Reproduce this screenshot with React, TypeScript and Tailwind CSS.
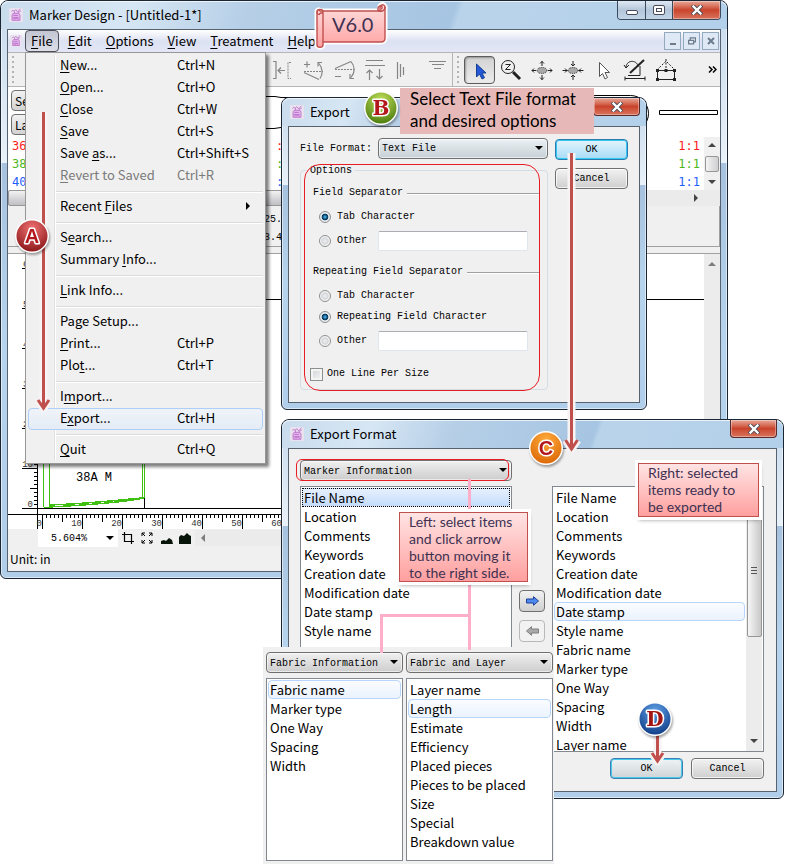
import type { ReactNode } from 'react';
import clsx from 'clsx';

interface MenuEntry {
  label: string;
  /** index of the underlined accelerator letter */
  key?: number;
  shortcut?: string;
  disabled?: boolean;
  submenu?: boolean;
}

const menuBar = ['File', 'Edit', 'Options', 'View', 'Treatment', 'Help'];

const fileMenu: MenuEntry[][] = [
  [
    { label: 'New...', key: 0, shortcut: 'Ctrl+N' },
    { label: 'Open...', key: 0, shortcut: 'Ctrl+O' },
    { label: 'Close', key: 0, shortcut: 'Ctrl+W' },
    { label: 'Save', key: 0, shortcut: 'Ctrl+S' },
    { label: 'Save as...', key: 5, shortcut: 'Ctrl+Shift+S' },
    { label: 'Revert to Saved', key: 0, shortcut: 'Ctrl+R', disabled: true },
  ],
  [{ label: 'Recent Files', key: 7, submenu: true }],
  [
    { label: 'Search...', key: 1 },
    { label: 'Summary Info...', key: 8 },
  ],
  [{ label: 'Link Info...', key: 0 }],
  [
    { label: 'Page Setup...', key: 2 },
    { label: 'Print...', key: 0, shortcut: 'Ctrl+P' },
    { label: 'Plot...', key: 3, shortcut: 'Ctrl+T' },
  ],
  [
    { label: 'Import...', key: 1 },
    { label: 'Export...', key: 1, shortcut: 'Ctrl+H' },
  ],
  [{ label: 'Quit', key: 0, shortcut: 'Ctrl+Q' }],
];

const markerFields = [
  'File Name',
  'Location',
  'Comments',
  'Keywords',
  'Creation date',
  'Modification date',
  'Date stamp',
  'Style name',
];

const fabricFields = ['Fabric name', 'Marker type', 'One Way', 'Spacing', 'Width'];

const layerFields = [
  'Layer name',
  'Length',
  'Estimate',
  'Efficiency',
  'Placed pieces',
  'Pieces to be placed',
  'Size',
  'Special',
  'Breakdown value',
];

const selectedFields = [...markerFields, ...fabricFields, 'Layer name'];

const sizes = [
  { size: '36', ratio: '1:1', color: 'text-[#ff1a1a]' },
  { size: '38', ratio: '1:1', color: 'text-[#4cb81c]' },
  { size: '40', ratio: '1:1', color: 'text-[#1f5fff]' },
];

function AppIcon({ className }: { className?: string }) {
  return (
    <svg viewBox="0 0 16 16" className={clsx('shrink-0', className)} aria-hidden="true">
      <rect width="16" height="16" rx="1" fill="#e9e2ee" />
      <path d="M4 6h8v8H4z" fill="#e3b6ea" />
      <path
        d="M3.500 14V7.500l2-1.500h5l2 1.500V14zM5 8.500h5M4 11h7M6 6c0-3 1-4 2-4s0 2 2 2 1-2 3-3M3 4c1-2 2-1 3 0M5 13c1-2 2 0 3-1s2 0 3 1M10 5c2 0 3-1 3-2"
        fill="none"
        stroke="#b968c9"
      />
    </svg>
  );
}

function CloseGlyph() {
  return (
    <svg viewBox="0 0 12 10" className="h-2.5 w-3" aria-hidden="true">
      <path d="M2.500 1.500l7 7M9.500 1.500l-7 7" stroke="#4a4a58" strokeWidth="4" strokeLinecap="square" />
      <path d="M2.500 1.500l7 7M9.500 1.500l-7 7" stroke="#fff" strokeWidth="2.400" strokeLinecap="square" />
    </svg>
  );
}

const closeStyle =
  'flex h-[18px] w-[47px] items-center justify-center bg-linear-to-b from-[#e6a89a] via-[#c9432b] via-50% to-[#d9735c] shadow-[inset_0_0_0_1px_rgba(255,255,255,0.35)]';

interface WindowProps {
  title: string;
  controls?: 'full' | 'close';
  className?: string;
  children: ReactNode;
}

function Window({ title, controls = 'close', className, children }: WindowProps) {
  return (
    <section
      aria-label={title}
      className={clsx(
        'flex flex-col rounded-t-lg rounded-b-md border border-[#1b2635] px-1.5 pb-1.5',
        'bg-[linear-gradient(to_bottom,#c6d9ec_0,#e9f1f9_28%,#a6c2de_28%,#b7d4ee_60%,#b0cdea_100%)] shadow-[inset_0_0_0_1px_rgba(255,255,255,0.55)]',
        className,
      )}
    >
      <header className="-mx-1.5 flex h-7 shrink-0 items-start rounded-t-lg bg-[linear-gradient(110deg,#c9dced_0,#d6e6f4_18%,#b6cfe7_34%,#a6c5e2_62%,#b9d3ea_63%,#b3d0ea_100%)] pl-2 pr-1.5 shadow-[inset_0_1px_0_rgba(255,255,255,0.7)]">
        <AppIcon className="mt-[7px] h-3.5 w-3.5" />
        <h2 className="ml-1.5 mt-1 flex-1 text-[13px] leading-5">{title}</h2>
        {controls === 'full' ? (
          <div className="flex overflow-hidden rounded-b border border-t-0 border-[#3c4a5c]">
            <button type="button" aria-label="Minimize" className="flex h-[18px] w-7 items-center justify-center border-r border-[#3c4a5c] bg-linear-to-b from-[#dfe9f3] via-[#b3c6da] to-[#c3d6e8]">
              <span className="mt-1 h-[5px] w-3 rounded-xs border border-[#4a4a58] bg-white" />
            </button>
            <button type="button" aria-label="Restore" className="flex h-[18px] w-[27px] items-center justify-center border-r border-[#3c4a5c] bg-linear-to-b from-[#dfe9f3] via-[#b3c6da] to-[#c3d6e8]">
              <span className="flex h-2.5 w-3 items-center justify-center rounded-xs border border-[#4a4a58] bg-white">
                <span className="h-1 w-1.5 border border-[#4a4a58]" />
              </span>
            </button>
            <button type="button" aria-label="Close" className={closeStyle}>
              <CloseGlyph />
            </button>
          </div>
        ) : (
          <button type="button" aria-label="Close" className={clsx(closeStyle, 'rounded-b border border-t-0 border-[#5a2a2a]')}>
            <CloseGlyph />
          </button>
        )}
      </header>
      <div className="flex flex-1 flex-col border border-[#566270] bg-[#f0f0f0]">{children}</div>
    </section>
  );
}

function Accel({ label, at }: { label: string; at?: number }) {
  if (at === undefined) return <>{label}</>;
  return (
    <>
      {label.slice(0, at)}
      <span className="underline underline-offset-2">{label[at]}</span>
      {label.slice(at + 1)}
    </>
  );
}

function FileMenu() {
  return (
    <div role="menu" className="absolute left-[25px] top-[52px] z-10 w-[241px] border border-[#979797] bg-[#f0f0f0] py-0.5 shadow-[3px_3px_3px_rgba(0,0,0,0.5)]">
      <div className="bg-[linear-gradient(to_right,transparent_28px,#e0e0e0_28px,#e0e0e0_29px,#fff_29px,#fff_30px,transparent_30px)]">
        {fileMenu.map((group, i) => (
          <div key={i}>
            {i > 0 && (
              <div className="flex h-[9px] items-center pl-[30px] pr-0.5">
                <hr className="w-full border-t border-[#dcdcdc] shadow-[0_1px_0_#fff]" />
              </div>
            )}
            {group.map((item) => (
              <button
                key={item.label}
                type="button"
                role="menuitem"
                disabled={item.disabled}
                className={clsx(
                  'mx-0.5 flex h-[22px] w-[235px] items-center rounded-sm border pb-0.5 pl-[31px] pr-3 text-left',
                  item.label === 'Export...' ? 'border-[#aecff7] bg-linear-to-b from-[#eff3f9] to-[#e5ecf6]' : 'border-transparent',
                  item.disabled && 'text-[#7a7a7a]',
                )}
              >
                <span className="w-[117px] whitespace-nowrap">
                  <Accel label={item.label} at={item.key} />
                </span>
                <span className="whitespace-nowrap">{item.shortcut}</span>
                {item.submenu && (
                  <svg viewBox="0 0 4 8" className="ml-auto h-2 w-1" aria-hidden="true">
                    <path d="M0 0l4 4-4 4z" />
                  </svg>
                )}
              </button>
            ))}
          </div>
        ))}
      </div>
    </div>
  );
}

function Grip() {
  return <span className="h-[27px] w-0.5 bg-[repeating-linear-gradient(to_bottom,#b4b4b4_0,#b4b4b4_2px,transparent_2px,transparent_5px)]" />;
}

function ToolIcon({ name, pressed, children }: { name: string; pressed?: boolean; children: ReactNode }) {
  return (
    <button
      type="button"
      aria-label={name}
      aria-pressed={pressed}
      className={clsx('flex h-7 w-[31px] shrink-0 items-center justify-center rounded', pressed && 'border border-[#5c5c5c] bg-linear-to-b from-[#d2d2d2] to-[#ececec] shadow-[inset_1px_1px_2px_rgba(0,0,0,0.3)]')}
    >
      <svg viewBox="0 0 24 24" className="h-6 w-6" fill="none" stroke="currentColor" strokeWidth="1">
        {children}
      </svg>
    </button>
  );
}

function Toolbar() {
  return (
    <div className="flex h-[34px] items-center border-b border-[#b5b5b5]">
      <span className="flex w-[258px] shrink-0 pl-1">
        <Grip />
      </span>
      <div className="flex text-[#858585]">
        <ToolIcon name="Align bracket">
          <path d="M3 3.500h3v17H3M8 12.500h7M11 9.500l-3 3 3 3" strokeWidth="1.200" />
          <path d="M21 4.500h-3v16h3" strokeDasharray="2 1" />
        </ToolIcon>
        <ToolIcon name="Rotate up">
          <path d="M3 6.500h6M6 3.500v6M3 14.500l15 7M19 20.500c3-4 3-10-1-15M17 8.500V4.500h4" strokeWidth="1.200" />
          <path d="M3 13.500h19" strokeDasharray="2 1" />
        </ToolIcon>
        <ToolIcon name="Rotate down">
          <path d="M3 18.500h6M3 10.500l16-7M19 3.500c4 5 4 11 0 16M18 16v4.500h4" strokeWidth="1.200" />
          <path d="M3 11.500h19" strokeDasharray="2 1" />
        </ToolIcon>
        <ToolIcon name="Space vertically">
          <path d="M3 2.500h17M2 7.500h20M6.500 22V12M3.500 15l3-3 3 3M16.500 11v10M13.500 18l3 3 3-3" strokeWidth="1.200" />
        </ToolIcon>
        <ToolIcon name="Stack vertically">
          <path d="M3.500 4v17M6.500 6v13M9.500 9v8" strokeWidth="1.200" />
        </ToolIcon>
        <ToolIcon name="Stack horizontally">
          <path d="M4 3.500h17M7 6.500h12M9 10.500h7" strokeWidth="1.200" />
        </ToolIcon>
      </div>
      <span className="mr-1 h-full w-px bg-[#b5b5b5]" />
      <Grip />
      <div className="ml-[5px] flex text-[#222]">
        <ToolIcon name="Select" pressed>
          <path d="M8.500 6v13l3-3 2.500 5 2.500-1.300-2.500-4.700h4z" fill="#2458d8" stroke="#16408f" />
        </ToolIcon>
        <ToolIcon name="Zoom">
          <circle cx="9" cy="9" r="6.500" />
          <path d="M6.500 6.500h5l-5 5h5" />
          <path d="M14 14l7 7" strokeWidth="3" />
        </ToolIcon>
        <ToolIcon name="Expand">
          <ellipse cx="12" cy="12.500" rx="5" ry="3" strokeDasharray="1 1" fill="#a8a8a8" />
          <path d="M12 3v5M12 17v5M2 12.500h4M18 12.500h4M10 5.500L12 3.500l2 2M10 19.500l2 2 2-2M4 10.500l-2 2 2 2M20 10.500l2 2-2 2" />
        </ToolIcon>
        <ToolIcon name="Contract">
          <ellipse cx="12" cy="12.500" rx="5" ry="3" strokeDasharray="1 1" fill="#a8a8a8" />
          <path d="M12 3v5M12 17v5M1.500 12.500h5M17.500 12.500h5M10 6l2 2 2-2M10 19l2-2 2 2M4 10.500l2 2-2 2M20 10.500l-2 2 2 2" />
        </ToolIcon>
        <ToolIcon name="Pointer">
          <path d="M7.500 4.500v14l3-3 2.500 5.500 2.500-1.500-2.500-5h4.500z" fill="#fff" stroke="#555" />
        </ToolIcon>
        <ToolIcon name="Rotate piece">
          <path d="M3 9c1-8 12-7 12 0M1 7l2 3 3-3M2 20.500h20M2 18.500v4M22 18.500v4M5 17.500h12V8" />
          <path d="M21 2L7 15" strokeWidth="2" />
        </ToolIcon>
        <ToolIcon name="Fold piece">
          <path d="M3.500 12.500h17v9h-17z" />
          <path d="M3 12l9-9 9 9M12 1v9" strokeDasharray="2 1.500" />
          <path d="M2 11h3v3H2zM19 11h3v3h-3zM2 20h3v3H2zM19 20h3v3h-3zM10.500 11h3v3h-3z" fill="#222" stroke="none" />
        </ToolIcon>
      </div>
      <button type="button" aria-label="More tools" className="ml-auto flex h-7 w-4 items-center justify-center">
        <svg viewBox="0 0 9 7" className="h-[7px] w-[9px]" fill="none" stroke="#000" strokeWidth="1.500">
          <path d="M1 .5l3 3-3 3M5 .5l3 3-3 3" />
        </svg>
      </button>
    </div>
  );
}

function Arrow({ dir, className }: { dir: 'up' | 'down' | 'left' | 'right'; className?: string }) {
  const paths = { up: 'M0 6l4-4 4 4z', down: 'M0 2l4 4 4-4z', left: 'M6 0v8L2 4z', right: 'M2 0v8l4-4z' };
  return (
    <svg viewBox="0 0 8 8" className={clsx('h-2 w-2 shrink-0', className)} aria-hidden="true">
      <path d={paths[dir]} fill="currentColor" />
    </svg>
  );
}

const ticks = Array.from({ length: 170 }, (_, i) => i);

function Workspace() {
  return (
    <>
      <div className="flex h-[260px] bg-white">
        <svg className="h-full min-w-0 flex-1" shapeRendering="crispEdges" aria-label="Marker drawing">
          <path d="M29.500 45.500H2000M14 254.500H2000" stroke="#000" />
          <path d="M29.500 0V260" stroke="#000" />
          {ticks.slice(0, 65).map((i) => (
            <path key={i} d={`M${i % 10 === 0 ? 14 : i % 5 === 0 ? 22 : 26} ${254.5 - i * 4}H29`} stroke="#000" />
          ))}
          {['0', '10', '20', '30', '40', '50', '60'].map((n, i) => (
            <text key={n} x={i > 1 ? 15 : 25} y={253 - i * 40} textAnchor={i > 1 ? 'start' : 'end'} fill="#333" className="font-['Liberation_Mono',monospace] text-[9px]">
              {n}
            </text>
          ))}
          <path d="M136.500 200v54" stroke="#000" />
          <path d="M35.500 200v53M41.500 200v53h-6M134.500 200v44M136 200v44" stroke="#3fc013" fill="none" />
          <path d="M41 253c40-2 70-4 95-9M41 251c35-1 60-4 93-7" stroke="#3fc013" strokeWidth="1.500" fill="none" />
          <text x="68" y="227" className="font-['Liberation_Mono',monospace] text-[12px]">
            38A M
          </text>
        </svg>
        <div className="flex w-4 justify-center bg-[#ececec] pt-1.5 text-[#7d7d7d]">
          <Arrow dir="up" />
        </div>
      </div>
      <svg className="h-[15px] w-full bg-white" shapeRendering="crispEdges" aria-label="Ruler">
        <path d="M0 .5H2000" stroke="#000" />
        {ticks.map((i) => (
          <path key={i} d={`M${34.5 + i * 4} 1V${i % 10 === 0 ? 15 : i % 5 === 0 ? 8 : 4}`} stroke="#000" />
        ))}
        <path d="M29.500 0v15" stroke="#000" />
        {ticks.slice(0, 7).map((i) => (
          <text key={i} x={34 + i * 40} y="12" textAnchor="end" fill="#333" className="font-['Liberation_Mono',monospace] text-[9px]">
            {i * 10}
          </text>
        ))}
      </svg>
    </>
  );
}

function MainWindow() {
  return (
    <Window title="Marker Design - [Untitled-1*]" controls="full" className="mr-[61px]">
      <nav aria-label="Main menu" className="flex h-[23px] items-center border-b border-[#b5b5b5] bg-linear-to-b from-white via-[#dde2f2] to-[#e2e6f6]">
        <AppIcon className="ml-0.5 h-3.5 w-3" />
        <div className="ml-[3px] flex">
          {menuBar.map((label, i) => (
            <button
              key={label}
              type="button"
              className={clsx(
                'h-[22px] rounded-sm border text-[13px] leading-5',
                i === 0 ? 'mr-0.5 border-[#4e4e58] bg-linear-to-b from-[#c3c6d2] to-[#dcdfe8] px-[5px]' : 'border-transparent px-1.5',
              )}
            >
              <Accel label={label} at={0} />
            </button>
          ))}
        </div>
        <div className="ml-auto flex gap-0.5 pr-px">
          <button type="button" aria-label="Minimize document" className="flex h-[18px] w-[17px] items-center justify-center border border-[#93a9bd] bg-[#dfe9f5]">
            <span className="mt-1.5 h-0.5 w-1.5 bg-[#6d7c8c]" />
          </button>
          <button type="button" aria-label="Restore document" className="flex h-[18px] w-[17px] items-center justify-center border border-[#93a9bd] bg-[#dfe9f5]">
            <svg viewBox="0 0 9 9" className="h-2 w-2" fill="none" stroke="#6d7c8c" strokeWidth="1.400">
              <path d="M2.500 3V1h6v4.500H7M.7 3.700h5.600v4H.7z" />
            </svg>
          </button>
          <button type="button" aria-label="Close document" className="flex h-[18px] w-[17px] items-center justify-center border border-[#93a9bd] bg-[#dfe9f5]">
            <svg viewBox="0 0 8 8" className="h-2 w-2" stroke="#6d7c8c" strokeWidth="2">
              <path d="M1 1l6 6M7 1L1 7" />
            </svg>
          </button>
        </div>
      </nav>

      <Toolbar />

      {/* Size table with the piece preview above it */}
      <div className="flex h-[50px] bg-white">
        <div className="flex w-[100px] shrink-0 flex-col gap-[3px] pl-[3px] pt-[3px]">
          <button type="button" className="h-[21px] rounded-sm border border-[#707070] bg-linear-to-b from-[#f2f2f2] to-[#d2d2d2] px-[3px] text-left text-[12px] leading-4">
            Search
          </button>
          <button type="button" className="h-[21px] rounded-sm border border-[#707070] bg-linear-to-b from-[#f2f2f2] to-[#d2d2d2] px-[3px] text-left text-[12px] leading-4">
            Layer
          </button>
        </div>
        <svg className="h-full min-w-0 flex-1" fill="none" stroke="#000" aria-label="Piece preview">
          <path d="M150 9.500h17l6 1h20M150 41.500h16l7-1h30" />
          <rect x="470" y="8.500" width="70.500" height="36" rx="18" />
          <path d="M551.500 23.500h58v4h-58z" />
        </svg>
      </div>
      <div className="flex h-[53px] bg-white">
        <ul className="flex-1 pl-1 font-['DejaVu_Sans_Mono','Noto_Sans_CJK_SC',monospace] text-[12px]">
          {sizes.map((row) => (
            <li key={row.size} className={clsx('flex h-[18px] items-center', row.color)}>
              <span className="w-[264px]">{row.size}</span>
              <span>:</span>
              <span className="ml-auto pr-1">{row.ratio}</span>
            </li>
          ))}
        </ul>
        <div className="flex w-4 flex-col items-center justify-between bg-[#f0f0f0] py-1 text-[#444]">
          <Arrow dir="up" />
          <span className="h-4 w-3.5 rounded-xs border border-[#979797] bg-linear-to-r from-[#f4f4f4] to-[#cfcfd1]" />
          <Arrow dir="down" />
        </div>
      </div>
      <div className="flex h-4 items-center bg-[#ebebeb] pr-5 text-[#444]">
        <span className="h-full w-[300px] rounded-xs border border-[#979797] bg-linear-to-b from-[#f2f2f2] to-[#bfbfc4]" />
        <Arrow dir="right" className="ml-auto" />
      </div>
      <div className="h-[41px] border-r border-b border-[#a0a0a0] pt-[5px] pl-[256px] font-['Liberation_Mono','Noto_Sans_CJK_SC',monospace] text-[10px] leading-[18px]">
        <p>25.</p>
        <p>3.4</p>
      </div>
      <div className="h-[7px] border-b border-[#a0a0a0]" />

      <Workspace />

      <div className="flex h-[18px] items-center pl-[30px]">
        <div className="flex h-[18px] w-20 items-center bg-white">
          <select aria-label="Zoom level" className="h-full w-full appearance-none pl-[13px] font-['Liberation_Mono','Noto_Sans_CJK_SC',monospace] text-[10px]">
            <option>5.604%</option>
          </select>
          <Arrow dir="down" className="mr-1" />
        </div>
        <svg viewBox="0 0 12 12" className="ml-1 h-3 w-3" fill="none" stroke="#000" strokeWidth="1.200" aria-hidden="true">
          <path d="M2.500 0v9.500H12M0 2.500h9.500V12" />
        </svg>
        <svg viewBox="0 0 12 12" className="ml-[7px] h-3 w-3" fill="none" stroke="#000" aria-hidden="true">
          <path d="M1 4V1h3M8 1h3v3M11 8v3H8M4 11H1V8M1 1l3 3M11 1L8 4M11 11L8 8M1 11l3-3" />
        </svg>
        <svg viewBox="0 0 12 12" className="ml-2 h-3 w-3" fill="#06140a" aria-hidden="true">
          <path d="M0 12V9l3-1 2 1 3-3 3 2 1 4z" />
        </svg>
        <svg viewBox="0 0 12 12" className="ml-1.5 h-3 w-3" fill="#06140a" aria-hidden="true">
          <path d="M0 12V5l2-2 3 1 3-3 2 2 2 1v8z" />
        </svg>
        <span className="ml-1 flex h-4 flex-1 items-center bg-[#ebebeb] pl-1 text-[#7d7d7d]">
          <Arrow dir="left" />
        </span>
      </div>
      <p className="h-6 pl-0.5 text-[12px] leading-6">Unit: in</p>
    </Window>
  );
}

const mono = "font-['Liberation_Mono','Noto_Sans_CJK_SC',monospace] text-[10px]";

function Combo({ label, value, cool }: { label: string; value: string; cool?: boolean }) {
  return (
    <div className="relative w-full">
      <select
        id={label.replace(/\W+/g, '-')}
        aria-label={label}
        className={clsx(
          mono,
          'block h-[21px] w-full appearance-none rounded-sm border border-[#6f6f6f] pt-px pl-[3px] shadow-[inset_0_0_0_1px_rgba(255,255,255,0.6)]',
          cool ? 'bg-linear-to-b from-[#ecf1f4] to-[#c6d0d6]' : 'bg-linear-to-b from-[#f0f0f0] to-[#cdcdcd]',
        )}
      >
        <option>{value}</option>
      </select>
      <Arrow dir="down" className="pointer-events-none absolute top-1.5 right-[5px]" />
    </div>
  );
}

function PushButton({ children, tone = 'plain' }: { children: ReactNode; tone?: 'plain' | 'hot' | 'default' }) {
  return (
    <button
      type="button"
      className={clsx(
        mono,
        'block h-[21px] w-[73px] rounded-sm border',
        tone === 'hot' && 'border-[#2b7cae] bg-linear-to-b from-[#e4f4fc] to-[#a5dcf7] shadow-[inset_0_0_0_1px_#35c6f4]',
        tone === 'default' && 'border-[#3c7fb1] bg-linear-to-b from-[#eef4f6] to-[#cfd4d6] shadow-[inset_0_0_0_1px_#48c8ea]',
        tone === 'plain' && 'border-[#707070] bg-linear-to-b from-[#f2f2f2] to-[#cfcfcf] shadow-[inset_0_0_0_1px_rgba(255,255,255,0.7)]',
      )}
    >
      {children}
    </button>
  );
}

function Radio({ name, label, checked }: { name: string; label: string; checked?: boolean }) {
  return (
    <label className="flex h-3.5 items-center gap-1.5">
      <input
        type="radio"
        name={name}
        defaultChecked={checked}
        className="h-3 w-3 appearance-none rounded-full border border-[#8e8f8f] bg-[radial-gradient(circle,#f0f0f0_0,#d3d6d9_45%,#f4f4f4_60%)] checked:border-[#8e8f8f] checked:bg-[radial-gradient(circle_at_50%_50%,#5cc9f5_0,#1b6ea0_22%,#0b2f50_42%,#e4eaee_52%)]"
      />
      {label}
    </label>
  );
}

function Separator({ title }: { title: string }) {
  return (
    <div className="flex h-3 items-center gap-1">
      <span>{title}</span>
      <span className="h-px flex-1 bg-[#a0a0a0] shadow-[0_1px_0_#fff]" />
    </div>
  );
}

function OtherField({ name }: { name: string }) {
  return (
    <div className="flex h-5 items-center">
      <div className="w-[59px]">
        <Radio name={name} label="Other" />
      </div>
      <input type="text" aria-label={`${name} character`} className="h-5 w-[150px] rounded-xs border border-[#dfe5ec] border-t-[#abadb3] bg-white px-1" />
    </div>
  );
}

function ExportDialog() {
  return (
    <Window title="Export" className="absolute left-[281px] top-[97px] z-20 w-[366px]">
      <form className={clsx(mono, 'flex gap-[7px] pt-[11px] pr-2.5 pb-3 pl-[11px] leading-3')}>
        <div className="flex-1">
          <div className="flex items-center">
            <label htmlFor="File-Format" className="w-[78px] shrink-0">
              File Format:
            </label>
            <Combo label="File Format" value="Text File" cool />
          </div>
          <div className="relative mt-[5px]">
            <fieldset className="rounded-sm border border-[#d3dde5] pb-2">
              <legend className="ml-1.5 px-[3px] pt-px">Options</legend>
              <div role="radiogroup" aria-label="Field Separator" className="pt-2.5 pl-3 pr-2">
                <Separator title="Field Separator" />
                <div className="mt-[11px] flex flex-col gap-[7px] pl-1.5">
                  <Radio name="Field separator" label="Tab Character" checked />
                  <OtherField name="Field separator" />
                </div>
              </div>
              <div role="radiogroup" aria-label="Repeating Field Separator" className="mt-[15px] pl-3 pr-2">
                <Separator title="Repeating Field Separator" />
                <div className="mt-[11px] flex flex-col gap-[7px] pl-1.5">
                  <Radio name="Repeating separator" label="Tab Character" />
                  <Radio name="Repeating separator" label="Repeating Field Character" checked />
                  <OtherField name="Repeating separator" />
                </div>
              </div>
              <label className="mt-4 ml-[9px] flex h-3.5 items-center gap-1">
                <input type="checkbox" className="h-[13px] w-[13px] appearance-none border border-[#8e8f8f] bg-linear-to-br from-[#cfd3d6] to-[#f6f6f6] shadow-[inset_0_0_0_2px_#f4f4f4]" />
                One Line Per Size
              </label>
            </fieldset>
            <div className="pointer-events-none absolute top-0 right-2 -bottom-px left-1 rounded-[16px] border border-[#e81c24]" />
          </div>
        </div>
        <div className="mr-px flex flex-col gap-2 pt-px">
          <PushButton tone="hot">OK</PushButton>
          <PushButton>Cancel</PushButton>
        </div>
      </form>
    </Window>
  );
}

interface FieldListProps {
  label: string;
  items: string[];
  hover?: string;
  selected?: string;
}

function FieldList({ label, items, hover, selected }: FieldListProps) {
  return (
    <ul role="listbox" aria-label={label} className="min-w-0 flex-1 px-px pt-px text-[13px]">
      {items.map((item) => (
        <li
          key={item}
          role="option"
          aria-selected={item === selected}
          className={clsx(
            'h-[19px] border pl-px leading-[17px] whitespace-nowrap',
            item === selected && 'border-dotted border-black bg-linear-to-b from-[#e6f0fd] to-[#c4dcfb]',
            item === hover && 'rounded-sm border-[#b8d6fb] bg-linear-to-b from-[#fafcff] to-[#ebf3fd]',
            item !== selected && item !== hover && 'border-transparent',
          )}
        >
          {item}
        </li>
      ))}
    </ul>
  );
}

function BlockArrow({ label, flip, disabled }: { label: string; flip?: boolean; disabled?: boolean }) {
  return (
    <button
      type="button"
      aria-label={label}
      disabled={disabled}
      className={clsx(
        'flex h-[22px] w-[26px] items-center justify-center rounded-sm border',
        disabled ? 'border-[#b8b8b8] bg-[#f2f2f2]' : 'border-[#707070] bg-linear-to-b from-[#f2f2f2] to-[#cfcfcf]',
      )}
    >
      <svg viewBox="0 0 13 10" className={clsx('h-2.5 w-[13px]', flip && 'rotate-180')} aria-hidden="true">
        <path d="M.5 3h7V.700L12.500 5l-5 4.300V7h-7z" fill={disabled ? '#a9a9a9' : '#4f8af0'} stroke={disabled ? '#7e7e7e' : '#1f3f94'} />
      </svg>
    </button>
  );
}

function ExportFormatDialog() {
  return (
    <Window title="Export Format" className="absolute left-[281px] top-[419px] z-30 w-[503px]">
      <div className="flex gap-[7px] pt-[11px] pr-3 pl-[11px]">
        <div className="flex min-w-0 flex-1 flex-col gap-[5px]">
          <div className="relative">
            <Combo label="Field source" value="Marker Information" />
            <div className="pointer-events-none absolute -top-px right-[3px] bottom-0 -left-1 rounded-md border border-[#e81c24]" />
          </div>
          <div className="flex flex-1 border border-[#828790] bg-white">
            <FieldList label="Available fields" items={markerFields} selected="File Name" />
          </div>
        </div>
        <div className="flex flex-col gap-2 pt-[130px]">
          <BlockArrow label="Add field" />
          <BlockArrow label="Remove field" flip disabled />
        </div>
        <div className="min-w-0 flex-1 pt-[26px]">
          <div className="flex h-[266px] overflow-hidden border border-[#828790] bg-white">
            <FieldList label="Selected fields" items={selectedFields} hover="Date stamp" />
            <div className="mr-px flex w-4 flex-col items-center bg-[#ececec] text-[#444]">
              <Arrow dir="up" className="my-1" />
              <div className="flex h-[134px] w-[15px] flex-col items-center justify-center gap-0.5 rounded-xs border border-[#979797] bg-linear-to-r from-[#f6f6f6] to-[#c8c8ca]">
                <span className="h-px w-1.5 bg-[#555]" />
                <span className="h-px w-1.5 bg-[#555]" />
                <span className="h-px w-1.5 bg-[#555]" />
              </div>
              <Arrow dir="down" className="mt-auto mb-1.5" />
            </div>
          </div>
        </div>
      </div>
      <div className="mt-1.5 flex justify-end gap-2 pr-3 pb-3">
        <PushButton tone="default">OK</PushButton>
        <PushButton>Cancel</PushButton>
      </div>
    </Window>
  );
}

function FieldSources() {
  return (
    <div className="absolute left-[263px] top-[647px] z-40 flex w-[291px] gap-[3px] bg-[#f0f0f0] pt-[5px] pr-px pb-[3px] pl-[3px]">
      <div className="flex w-[137px] flex-col gap-[5px]">
        <Combo label="Fabric source" value="Fabric Information" />
        <div className="flex flex-1 border border-[#828790] bg-white pb-[9px]">
          <FieldList label="Fabric fields" items={fabricFields} hover="Fabric name" />
        </div>
      </div>
      <div className="flex flex-1 flex-col gap-[5px]">
        <Combo label="Layer source" value="Fabric and Layer" />
        <div className="flex flex-1 border border-[#828790] bg-white pb-[9px]">
          <FieldList label="Layer fields" items={layerFields} hover="Length" />
        </div>
      </div>
    </div>
  );
}

const badgeColors = {
  A: { light: '#f07070', dark: '#8e1a1c', letter: '#b3181c', font: "font-['Liberation_Sans',sans-serif]" },
  B: { light: '#c3e05a', dark: '#4e7f10', letter: '#b3181c', font: "font-['DejaVu_Serif',serif]" },
  C: { light: '#ffab3d', dark: '#dd6a08', letter: '#b3181c', font: "font-['Liberation_Sans',sans-serif]" },
  D: { light: '#5fa0e6', dark: '#12408a', letter: '#a01414', font: "font-['DejaVu_Serif',serif]" },
};

function Badge({ step, className }: { step: keyof typeof badgeColors; className: string }) {
  const c = badgeColors[step];
  return (
    <svg viewBox="0 0 38 38" className={clsx('absolute z-50 h-[38px] w-[38px] drop-shadow-[1px_2px_1px_rgba(0,0,0,0.35)]', className)}>
      <defs>
        <radialGradient id={`badge-${step}`} cx="50%" cy="25%" r="75%">
          <stop offset="0" stopColor={c.light} />
          <stop offset="1" stopColor={c.dark} />
        </radialGradient>
      </defs>
      <circle cx="19" cy="19" r="17" fill="#fff" />
      <circle cx="19" cy="19" r="15.500" fill={`url(#badge-${step})`} />
      <text x="19" y="26" textAnchor="middle" fill={c.letter} stroke="#fff" strokeWidth="3" strokeLinejoin="round" paintOrder="stroke" className={clsx('text-[20px] font-bold', c.font)}>
        {step}
      </text>
    </svg>
  );
}

const calloutStyle =
  "absolute z-50 border border-[#c0504d] bg-linear-to-b from-[#ffe4e4] to-[#ff9f9f] pl-[9px] font-['Lato',sans-serif] text-[14px] leading-[17px] whitespace-nowrap text-[#403152] shadow-[0_0_0_3px_#fff,1px_3px_4px_rgba(0,0,0,0.4)]";

function Annotations() {
  return (
    <>
      {/* Links from the source combo to its two other lists */}
      <svg className="pointer-events-none absolute left-[370px] top-[479px] z-40 h-[176px] w-[110px]" fill="none" stroke="#ffaec9" strokeWidth="3" aria-hidden="true">
        <path d="M99.500 0v171M99.500 136.500H11.500V174" />
      </svg>
      {/* Step arrows */}
      <svg className="pointer-events-none absolute top-0 left-0 z-40 h-full w-full" fill="none" aria-hidden="true">
        {['M43.500 112V407M38 400l5.500 8 5.500-8', 'M571.500 153V449M565.500 440l6 9 6-9', 'M657.500 732V760M652 753l5.500 8 5.500-8'].map((d) => (
          <g key={d}>
            <path d={d} stroke="#f7f3f3" strokeWidth="8" strokeLinejoin="round" />
            <path d={d} stroke="#c0504d" strokeWidth="3" />
          </g>
        ))}
      </svg>

      <Badge step="A" className="left-[13px] top-[217px]" />
      <Badge step="B" className="left-[362px] top-[89px]" />
      <Badge step="C" className="left-[527px] top-[429px]" />
      <Badge step="D" className="left-[636px] top-[700px]" />

      <div className="absolute left-[314px] top-0.5 z-50 font-['Lato',sans-serif]">
        <svg viewBox="0 0 76 48" className="h-12 w-[76px]" aria-hidden="true">
          <defs>
            <linearGradient id="scroll" x2="0" y2="1">
              <stop offset="0" stopColor="#ffdede" />
              <stop offset="1" stopColor="#ffa2a2" />
            </linearGradient>
          </defs>
          <path d="M6 9h60V4c3-3 6 0 5 3v29c0 3-2 4-4 4H9v3c0 3-6 3-6 0V10c0-2 2-3 3-1z" stroke="#fff" strokeWidth="5" fill="#fff" />
          <path d="M6 9h60V4c3-3 6 0 5 3v29c0 3-2 4-4 4H9v3c0 3-6 3-6 0V10c0-2 2-3 3-1z" fill="url(#scroll)" stroke="#c0504d" strokeWidth="1.400" />
          <path d="M9 40V10c0-4-6-3-6 0 0 3 3 3 3 1M6 11h3M71 5c0 4-4 5-6 4s-1-6 2-5c2 1 1 3 0 3M65 9h4" fill="none" stroke="#c0504d" strokeWidth="1.400" />
        </svg>
        <span className="absolute top-2.5 left-[18px] text-[20px] leading-6 text-[#403152]">V6.0</span>
      </div>

      <p className="absolute left-[400px] top-[88px] z-40 w-[194px] bg-[#e6b8b7] pb-0.5 pl-2.5 font-['Lato',sans-serif] text-[17px] leading-[22px] whitespace-nowrap">
        Select Text File format
        <br />
        and desired options
      </p>
      <p className={clsx(calloutStyle, 'left-[399px] top-[512px] w-[129px]')}>
        Left: select items
        <br />
        and click arrow
        <br />
        button moving it
        <br />
        to the right side.
      </p>
      <p className={clsx(calloutStyle, 'left-[638px] top-[463px] w-[121px] pb-px')}>
        Right: selected
        <br />
        items ready to
        <br />
        be exported
      </p>
    </>
  );
}

export default function App() {
  return (
    <main className="relative min-h-screen overflow-hidden bg-white font-['Noto_Sans_CJK_SC','Noto_Sans',sans-serif] text-[13px] leading-5 text-black">
      <MainWindow />
      <FileMenu />
      <ExportDialog />
      <ExportFormatDialog />
      <FieldSources />
      <Annotations />
    </main>
  );
}
